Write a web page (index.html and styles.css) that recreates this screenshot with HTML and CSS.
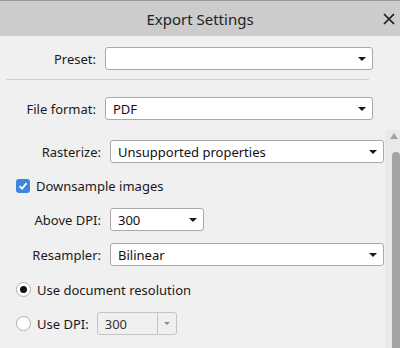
FILE: index.html
```html
<!DOCTYPE html>
<html>
<head>
    <title>Export Settings</title>
    <link rel="stylesheet" href="styles.css">
</head>
<body>
    <div class="dialog">
        <div class="titlebar">
            <span class="title">Export Settings</span>
            <svg class="close" width="14" height="14" viewBox="0 0 14 14">
                <path d="M2 2 L12 12 M12 2 L2 12" stroke="#1a1a1a" stroke-width="1.7" fill="none"/>
            </svg>
        </div>
        <div class="top">
            <div class="row">
                <label class="lbl">Preset:</label>
                <div class="select wide"><span></span><i class="arrow"></i></div>
            </div>
            <div class="sep"></div>
            <div class="row">
                <label class="lbl">File format:</label>
                <div class="select wide"><span>PDF</span><i class="arrow"></i></div>
            </div>
        </div>
        <div class="scroll">
            <div class="content">
                <div class="row">
                    <label class="lbl">Rasterize:</label>
                    <div class="select full"><span>Unsupported properties</span><i class="arrow"></i></div>
                </div>
                <div class="check-row">
                    <span class="checkbox">
                        <svg width="10" height="10" viewBox="0 0 10 10">
                            <path d="M1.5 5.2 L4 7.6 L8.6 2.2" stroke="#fff" stroke-width="1.8" fill="none"/>
                        </svg>
                    </span>
                    <span>Downsample images</span>
                </div>
                <div class="row">
                    <label class="lbl">Above DPI:</label>
                    <div class="select small"><span>300</span><i class="arrow"></i></div>
                </div>
                <div class="row">
                    <label class="lbl">Resampler:</label>
                    <div class="select full"><span>Bilinear</span><i class="arrow"></i></div>
                </div>
                <div class="check-row">
                    <span class="radio on"></span>
                    <span>Use document resolution</span>
                </div>
                <div class="check-row last">
                    <span class="radio"></span>
                    <span>Use DPI:</span>
                    <div class="combo">
                        <span class="value">300</span>
                        <span class="drop"><i class="arrow dim"></i></span>
                    </div>
                </div>
            </div>
            <div class="scrollbar">
                <i class="up"></i>
                <div class="thumb"></div>
            </div>
        </div>
    </div>
</body>
</html>
```

FILE: styles.css
```css
body {
    margin: 0;
    font-family: "Noto Sans", "Open Sans", sans-serif;
    font-size: 13px;
    color: #1a1a1a;
    background-color: #f0f0f0;
}
.dialog {
    width: 400px;
    height: 348px;
    overflow: hidden;
    display: flex;
    flex-direction: column;
}
.titlebar {
    height: 35px;
    border-top: 1px solid #9a9a9a;
    background-color: #cccccc;
    display: flex;
    align-items: center;
    justify-content: center;
    position: relative;
}
.title {
    font-size: 15px;
    color: #222;
}
.close {
    position: absolute;
    right: 4px;
    top: 11px;
}
.top {
    padding: 11px 27px 10px 0;
}
.row {
    display: flex;
    align-items: center;
    height: 23px;
}
.lbl {
    width: 105px;
    text-align: right;
    padding-right: 9px;
    box-sizing: border-box;
}
.select {
    height: 23px;
    box-sizing: border-box;
    border: 1px solid #a9a9a9;
    border-radius: 3px;
    background-color: #fff;
    display: flex;
    align-items: center;
    justify-content: space-between;
    padding: 0 6px 0 7px;
    color: #111;
}
.wide {
    flex: 1;
}
.arrow {
    width: 0;
    height: 0;
    border-left: 4px solid transparent;
    border-right: 4px solid transparent;
    border-top: 4px solid #1a1a1a;
}
.arrow.dim {
    border-left-width: 3px;
    border-right-width: 3px;
    border-top: 3px solid #8a8a8a;
}
.sep {
    height: 1px;
    background-color: #d0d0d0;
    margin: 9px 4px 17px 6px;
}
.scroll {
    flex: 1;
    display: flex;
}
.content {
    flex: 1;
    padding: 10px 1px 0 16px;
}
.content .lbl {
    width: 94px;
    padding-right: 9px;
}
.full {
    flex: 1;
}
.small {
    width: 94px;
}
.content .row {
    margin-bottom: 12px;
}
.check-row {
    display: flex;
    align-items: center;
    height: 23px;
    margin-bottom: 11px;
    gap: 6px;
}
.content > .row:first-child {
    margin-bottom: 11px;
}
.checkbox {
    width: 14px;
    height: 14px;
    border-radius: 3px;
    background-color: #3d86de;
    display: flex;
    align-items: center;
    justify-content: center;
}
.radio {
    width: 13px;
    height: 13px;
    border-radius: 50%;
    border: 1px solid #b0b0b0;
    background-color: #fff;
    display: flex;
    align-items: center;
    justify-content: center;
}
.radio.on::after {
    content: "";
    width: 7px;
    height: 7px;
    border-radius: 50%;
    background-color: #111;
}
.combo {
    margin-left: 2px;
    width: 80px;
    height: 23px;
    box-sizing: border-box;
    border: 1px solid #c4c4c4;
    border-radius: 3px;
    display: flex;
    color: #333;
}
.combo .value {
    flex: 1;
    padding-left: 7px;
    display: flex;
    align-items: center;
    border-right: 1px solid #c4c4c4;
}
.combo .drop {
    width: 18px;
    display: flex;
    align-items: center;
    justify-content: center;
}
.scrollbar {
    width: 15px;
    background-color: #e9e9e9;
    position: relative;
}
.up {
    position: absolute;
    left: 5px;
    top: 3px;
    width: 0;
    height: 0;
    border-left: 4px solid transparent;
    border-right: 4px solid transparent;
    border-bottom: 6px solid #a0a0a0;
}
.thumb {
    position: absolute;
    left: 7px;
    right: 0;
    top: 22px;
    bottom: 0;
    background-color: #a3a3a3;
    border-radius: 4px 4px 0 0;
}
```
